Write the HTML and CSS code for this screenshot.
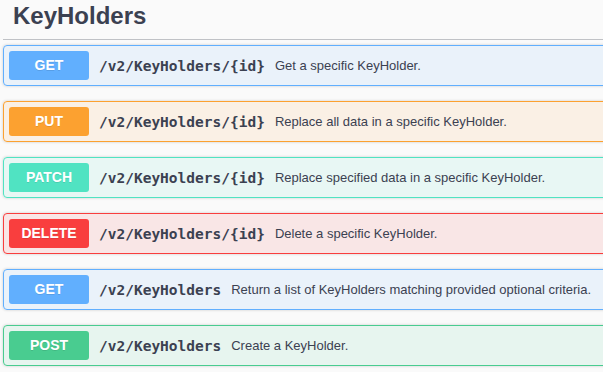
FILE: index.html
```html
<!DOCTYPE html>
<html lang="en">
<head>
    <meta charset="UTF-8">
    <meta name="viewport" content="width=device-width, initial-scale=1.0">
    <title>KeyHolders</title>
    <link rel="stylesheet" href="styles.css">
</head>
<body>

    <div class="tag-section">
        <h3 class="tag-title">KeyHolders</h3>

        <div class="opblock opblock-get">
            <span class="method">GET</span>
            <span class="path">/v2/KeyHolders/{id}</span>
            <span class="summary">Get a specific KeyHolder.</span>
        </div>

        <div class="opblock opblock-put">
            <span class="method">PUT</span>
            <span class="path">/v2/KeyHolders/{id}</span>
            <span class="summary">Replace all data in a specific KeyHolder.</span>
        </div>

        <div class="opblock opblock-patch">
            <span class="method">PATCH</span>
            <span class="path">/v2/KeyHolders/{id}</span>
            <span class="summary">Replace specified data in a specific KeyHolder.</span>
        </div>

        <div class="opblock opblock-delete">
            <span class="method">DELETE</span>
            <span class="path">/v2/KeyHolders/{id}</span>
            <span class="summary">Delete a specific KeyHolder.</span>
        </div>

        <div class="opblock opblock-get">
            <span class="method">GET</span>
            <span class="path">/v2/KeyHolders</span>
            <span class="summary">Return a list of KeyHolders matching provided optional criteria.</span>
        </div>

        <div class="opblock opblock-post">
            <span class="method">POST</span>
            <span class="path">/v2/KeyHolders</span>
            <span class="summary">Create a KeyHolder.</span>
        </div>
    </div>

</body>
</html>
```

FILE: styles.css
```css
html {
    overflow: hidden;
}
body {
    font-family: 'Liberation Sans', Arial, sans-serif;
    margin: 0;
    padding: 0 0 0 3px;
    background-color: #fafafa;
    color: #3b4151;
}
.tag-section {
    width: 660px;
}
.tag-title {
    margin: 0 0 5px;
    padding: 2px 20px 9px 10px;
    font-size: 24px;
    line-height: 28px;
    font-weight: bold;
    color: #3b4151;
    border-bottom: 1px solid rgba(59, 65, 81, 0.3);
}
.opblock {
    display: flex;
    align-items: center;
    padding: 5px;
    margin-bottom: 15px;
    border: 1px solid;
    border-radius: 4px;
    box-shadow: 0 0 3px rgba(0, 0, 0, 0.19);
}
.method {
    flex: 0 0 80px;
    width: 80px;
    padding: 6px 0;
    border-radius: 3px;
    font-size: 14px;
    line-height: 17px;
    font-weight: bold;
    text-align: center;
    color: #fff;
    text-shadow: 0 1px 0 rgba(0, 0, 0, 0.1);
}
.path {
    padding: 0 10px;
    font-family: 'DejaVu Sans Mono', monospace;
    font-size: 14.5px;
    font-weight: bold;
    color: #3b4151;
}
.summary {
    font-size: 13px;
    color: #3b4151;
}
.opblock-get {
    background-color: rgba(97, 175, 254, 0.1);
    border-color: #61affe;
}
.opblock-get .method {
    background-color: #61affe;
}
.opblock-put {
    background-color: rgba(252, 161, 48, 0.1);
    border-color: #fca130;
}
.opblock-put .method {
    background-color: #fca130;
}
.opblock-patch {
    background-color: rgba(80, 227, 194, 0.1);
    border-color: #50e3c2;
}
.opblock-patch .method {
    background-color: #50e3c2;
}
.opblock-delete {
    background-color: rgba(249, 62, 62, 0.1);
    border-color: #f93e3e;
}
.opblock-delete .method {
    background-color: #f93e3e;
}
.opblock-post {
    background-color: rgba(73, 204, 144, 0.1);
    border-color: #49cc90;
}
.opblock-post .method {
    background-color: #49cc90;
}
```
